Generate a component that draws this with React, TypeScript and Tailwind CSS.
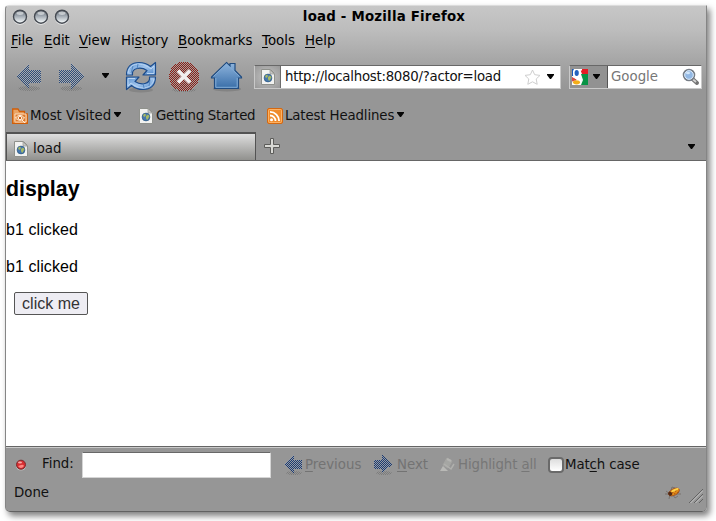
import React from 'react';

const U = ({ children }: { children: React.ReactNode }) => (
  <span className="underline decoration-1 underline-offset-2 [text-decoration-skip-ink:none]">{children}</span>
);

const Caret = ({ className = '' }: { className?: string }) => (
  <svg className={`shrink-0 ${className}`} width="7" height="5" viewBox="0 0 7 5">
    <path d="M0 0H7V1L4 5H3L0 1Z" fill="#050505" />
  </svg>
);

const Orb = () => (
  <svg width="16" height="16" viewBox="0 0 16 16" className="shrink-0">
    <defs>
      <linearGradient id="orb" x1="0" y1="0" x2="0" y2="1">
        <stop offset="0" stopColor="#5d646d" />
        <stop offset=".45" stopColor="#a2aab3" />
        <stop offset="1" stopColor="#fbffff" />
      </linearGradient>
    </defs>
    <circle cx="8" cy="8.7" r="7.200" fill="#e5e5e5" />
    <circle cx="8" cy="7.700" r="6.500" fill="url(#orb)" stroke="#454a52" strokeWidth="1.400" />
    <ellipse cx="8" cy="4.200" rx="3.500" ry="1.700" fill="#f0f3f5" opacity=".6" />
  </svg>
);

const DitherDefs = () => (
  <defs>
    <pattern id="ditherBlue" width="2" height="2" patternUnits="userSpaceOnUse">
      <rect width="2" height="2" fill="#a9abaf" />
      <path d="M0 0h1v1H0zM1 1h1v1H1z" fill="#2f4d78" shapeRendering="crispEdges" />
    </pattern>
    <pattern id="ditherNavy" width="2" height="2" patternUnits="userSpaceOnUse">
      <rect width="2" height="2" fill="#979ca5" />
      <path d="M0 0h1v1H0zM1 1h1v1H1z" fill="#1d3b70" shapeRendering="crispEdges" />
    </pattern>
    <pattern id="ditherRed" width="2" height="2" patternUnits="userSpaceOnUse">
      <rect width="2" height="2" fill="#a3a19f" />
      <path d="M1 0h1v1H1zM0 1h1v1H0z" fill="#8c1d15" shapeRendering="crispEdges" />
    </pattern>
    <pattern id="ditherShade" width="2" height="2" patternUnits="userSpaceOnUse">
      <path d="M0 0h1v1H0zM1 1h1v1H1z" fill="#7c7c7c" shapeRendering="crispEdges" />
    </pattern>
  </defs>
);

const BigArrow = ({ flip = false }: { flip?: boolean }) => (
  <svg width="28" height="30" viewBox="0 0 28 30" className="shrink-0">
    {!flip && <DitherDefs />}
    <ellipse cx="14" cy="26.500" rx="11" ry="2.500" fill="url(#ditherShade)" />
    <path
      d={flip ? 'M2 7.500H14V1L27 14L14 27V20.500H2Z' : 'M26 7.500H14V1L1 14L14 27V20.500H26Z'}
      fill="url(#ditherBlue)"
      shapeRendering="crispEdges"
    />
  </svg>
);

const SmallArrow = ({ flip = false }: { flip?: boolean }) => (
  <svg width="20" height="22" viewBox="0 0 20 22" className="shrink-0">
    <ellipse cx="11" cy="19" rx="8" ry="2" fill="url(#ditherShade)" />
    <path
      d={flip ? 'M1 6H9V1L19 10.500L9 19V15H1Z' : 'M19 6H11V1L1 10.500L11 19V15H19Z'}
      fill="url(#ditherNavy)"
      shapeRendering="crispEdges"
    />
  </svg>
);

const Reload = () => (
  <svg width="34" height="34" viewBox="0 0 34 34" className="shrink-0">
    <defs>
      <linearGradient id="rel" x1="0" y1="0" x2="1" y2="1">
        <stop offset="0" stopColor="#5c92cf" />
        <stop offset=".5" stopColor="#a0c4ec" />
        <stop offset="1" stopColor="#4d86c8" />
      </linearGradient>
    </defs>
    <ellipse cx="17" cy="30" rx="12" ry="2.500" fill="#7e7e7e" opacity=".7" />
    <g fill="url(#rel)" stroke="#1c4c8c" strokeWidth="1.200" strokeLinejoin="round">
      <path d="M2.500 15C2.500 6 8 2.500 15 2.500C20 2.500 23.500 4 26.500 6.500L31.500 2.500V15H19L23 10.500C20 8.500 17 7.500 13 8.500C9 9.500 8 12 8.500 15Z" />
      <path d="M31.500 17C31.500 26 26 29.500 19 29.500C14 29.500 10.500 28 7.500 25.500L2.500 29.500V17H15L11 21.500C14 23.500 17 24.500 21 23.500C25 22.500 26 20 25.500 17Z" />
    </g>
    <path d="M4 13C5 6 10 4 15 4C20 4 23 6 27 9L30 6V13.500H23M30 19C29 25 24 28 19 28C14 28 11 26 7 23L4 26V18.500H11" fill="none" stroke="#bad5f3" strokeWidth="1" />
    <path d="M9 6L7 13M14 4L13 9M19 23L20 28M26 20L25 26" stroke="#447ab9" strokeWidth=".8" />
  </svg>
);

const Stop = () => (
  <svg width="32" height="34" viewBox="0 0 32 34" className="shrink-0">
    <ellipse cx="16" cy="30" rx="12" ry="2" fill="url(#ditherShade)" />
    <circle cx="16" cy="16.500" r="15" fill="url(#ditherRed)" shapeRendering="crispEdges" />
    <path d="M10 10.500L22 22.500M22 10.500L10 22.500" stroke="#f0eeee" strokeWidth="3.800" />
  </svg>
);

const Home = () => (
  <svg width="34" height="34" viewBox="0 0 34 34" className="shrink-0">
    <defs>
      <linearGradient id="hom" x1="0" y1="0" x2="0" y2="1">
        <stop offset="0" stopColor="#8fb5dd" />
        <stop offset="1" stopColor="#386da8" />
      </linearGradient>
    </defs>
    <ellipse cx="17" cy="29" rx="14" ry="2.500" fill="#777" opacity=".6" />
    <path d="M16.500 2.500L20 6V3.500H25V10.500L31.500 17V18H28.500V28.500H4.500V18H1.500V17Z" fill="url(#hom)" stroke="#214c80" strokeWidth="1.200" />
    <path d="M3.500 16.500L16.500 4L29.500 16.500M5.800 18V27.300H27.200V18" fill="none" stroke="#83add7" strokeWidth="1" />
  </svg>
);

const Page = () => (
  <svg width="14" height="16" viewBox="0 0 14 16" className="shrink-0">
    <path d="M.5 .5H9.500L13.500 4.500V15.500H.5Z" fill="#f2f2f0" stroke="#8f918c" />
    <path d="M9 1V5H13Z" fill="#c8c9c5" stroke="#969793" strokeWidth=".7" />
    <circle cx="7" cy="9" r="3.900" fill="#4677ae" stroke="#28547f" strokeWidth=".7" />
    <path d="M4 7L6 5.500L7 7L6 8.500L5 9ZM7 8L9 6.500L10.500 8L9 11L8 12L7 10Z" fill="#a7b963" />
  </svg>
);

const Folder = () => (
  <svg width="16" height="16" viewBox="0 0 16 16" className="shrink-0">
    <path d="M.7 15V1H6L7.500 3.500H12.500V6H15.300V15.300H.7Z" fill="#eaa565" stroke="#d15e08" strokeWidth="1.300" />
    <path d="M3 13.500V6H14V14H3" fill="#dd7a2c" stroke="#ffdcba" />
    <path d="M3.500 10C6 6.500 10 6.500 12.500 10C10 13 6 13 3.500 10Z" fill="#e99953" stroke="#fff0df" />
    <circle cx="8" cy="10" r="1.700" fill="#cb621b" stroke="#fff0df" />
    <path d="M10 12L13 15" stroke="#fff0df" />
  </svg>
);

const Feed = () => (
  <svg width="16" height="16" viewBox="0 0 16 16" className="shrink-0">
    <rect x=".5" y=".5" width="15" height="15" rx="1.500" fill="#ef8b2c" stroke="#d36811" />
    <rect x="1.500" y="1.500" width="13" height="13" rx="1" fill="none" stroke="#ffbd74" strokeWidth=".8" />
    <circle cx="4.500" cy="11.700" r="1.500" fill="#fff" />
    <path d="M3 7.500A5.500 5.500 0 0 1 8.500 13M3 3.900A9.100 9.100 0 0 1 12.100 13" fill="none" stroke="#fff" strokeWidth="1.800" />
  </svg>
);

const Google = () => (
  <svg width="16" height="16" viewBox="0 0 16 16" className="shrink-0">
    <rect width="16" height="16" fill="#f9f9f9" />
    <path d="M8 0H16V5H10Z" fill="#e51b23" />
    <path d="M9 5H16V16H9L11 11Z" fill="#079345" />
    <path d="M0 8L5 11L2 14L0 12Z" fill="#d94a42" />
    <path d="M0 0H3L1 7H0Z" fill="#1958b8" />
    <path d="M2 0H10V1.500H8.500L9 7L7 8.500L9 11V15L7 16H1L0 13L5 10.500L3 8L1 6V2Z" fill="#fff" />
    <ellipse cx="4.700" cy="3.900" rx="2.100" ry="3" fill="#2462be" />
    <ellipse cx="4.500" cy="13.300" rx="3.500" ry="2.100" fill="#f4ae17" />
    <path d="M0 9L4 11" stroke="#d94a42" strokeWidth="1.200" />
  </svg>
);

const Magnifier = () => (
  <svg width="18" height="18" viewBox="0 0 18 18" className="shrink-0">
    <path d="M10.500 11L15 15" stroke="#747474" strokeWidth="4" strokeLinecap="round" />
    <path d="M10.500 11L14 14" stroke="#d3d3d3" strokeWidth="1.800" />
    <circle cx="7" cy="7" r="5.500" fill="#93b9e5" stroke="#777e87" strokeWidth="1.600" />
    <circle cx="7" cy="7" r="4.300" fill="none" stroke="#ddebf9" />
    <ellipse cx="6" cy="5" rx="2" ry="1.300" fill="#d4e7fa" />
  </svg>
);

const Star = () => (
  <svg width="17" height="17" viewBox="0 0 17 17" className="shrink-0">
    <path d="M8.500 1L10.700 5.700L16 6.400L12.200 10L13.200 15.300L8.500 12.800L3.800 15.300L4.800 10L1 6.400L6.300 5.700Z" fill="#fff" stroke="#cecece" strokeLinejoin="round" />
  </svg>
);

const Plus = () => (
  <svg width="17" height="17" viewBox="0 0 17 17" className="shrink-0">
    <path d="M6.500 .5H9.500V6.500H15.500V9.500H9.500V15.500H6.500V9.500H.5V6.500H6.500Z" fill="#d9d9d5" stroke="#5c5c5a" />
  </svg>
);

const Marker = () => (
  <svg width="17" height="16" viewBox="0 0 17 16" className="shrink-0">
    <path d="M1 14L4 9L9 14Z" fill="#b9b9b6" />
    <path d="M4 8L8 1L13 4L9 11Z" fill="#a5a6a3" stroke="#a5a5a2" />
    <path d="M5 7L12 12L15 7" fill="none" stroke="#b0b0ad" strokeWidth="1.500" />
    <path d="M8 2L12 4" stroke="#b5b5b2" strokeWidth="2" />
  </svg>
);

const Bug = () => (
  <svg width="16" height="14" viewBox="0 0 16 14" className="shrink-0">
    <path d="M0 8L5 8M1 5L5 8M5 8L4 13M8 9L10 12L13 10M11 8H16M6 4L7 1L10 2" fill="none" stroke="#6d6660" strokeWidth=".7" />
    <ellipse cx="9" cy="6" rx="5.800" ry="3.200" transform="rotate(-28 9 6)" fill="#e18b17" stroke="#9e4413" strokeWidth=".7" />
    <ellipse cx="10" cy="4" rx="4" ry="1.200" transform="rotate(-25 10 4)" fill="#ffd44d" />
    <path d="M3 7Q5 4 7 7Q8 9 5 10Q3 9 3 7" fill="#542a17" />
    <path d="M7 7L13 4M9 8L14 6" stroke="#9c4312" strokeWidth=".8" strokeDasharray="1.500 2" />
  </svg>
);

export default function App() {
  return (
    <div className="h-[521px] w-[716px] overflow-hidden bg-white pl-[5px] pt-[5px] font-['DejaVu_Sans',sans-serif] text-[13.333px] leading-[20px] text-[#111]">
      <div className="flex h-[507px] w-[702px] flex-col overflow-hidden rounded-b-[5px] rounded-tl-[4px] border border-[#858585] border-b-[#626262] border-t-[#dcdcdc] bg-[linear-gradient(to_bottom,#c7c7c7_0px,#bcbcbc_25px,#a6a6a6_55px,#969696_83px)] shadow-[3px_4px_6px_rgba(0,0,0,0.5)]">
        <header className="grid h-[21px] shrink-0 grid-cols-[76px_1fr_20px] items-center">
          <div className="flex gap-[5px] pl-[6px]"><Orb /><Orb /><Orb /></div>
          <div className="text-center font-bold tracking-[0.22px] text-black">load - Mozilla Firefox</div>
        </header>

        <nav className="flex h-[28px] shrink-0 items-start whitespace-nowrap pl-[5px] pt-[4px] text-black">
          <span className="w-[33px]"><U>F</U>ile</span>
          <span className="w-[35px]"><U>E</U>dit</span>
          <span className="w-[42px]"><U>V</U>iew</span>
          <span className="w-[57px]">Hi<U>s</U>tory</span>
          <span className="w-[84px]"><U>B</U>ookmarks</span>
          <span className="w-[43px]"><U>T</U>ools</span>
          <span><U>H</U>elp</span>
        </nav>

        <div className="flex h-[44px] shrink-0 items-center pl-[9px]">
          <BigArrow /><div className="w-[14px]" /><BigArrow flip />
          <Caret className="mb-[3px] ml-[17px]" />
          <div className="ml-[15px] flex items-center gap-[10px]"><Reload /><Stop /><Home /></div>
          <div className="ml-[10px] flex h-[24px] w-[307px] shrink-0 items-center border border-[#c9c9c9] border-t-[#686868] bg-white">
            <div className="flex h-full w-[26px] items-center justify-center border-r border-[#6c6c6c] bg-[radial-gradient(#c5c5c5,#989898)]"><Page /></div>
            <span className="w-[243px] whitespace-nowrap pl-[4px] tracking-[-0.265px]">http://localhost:8080/?actor=load</span>
            <Star /><Caret className="mb-[2px] ml-[6px]" />
          </div>
          <div className="ml-[8px] flex h-[24px] w-[133px] shrink-0 items-center border border-[#c9c9c9] border-t-[#686868] bg-white">
            <div className="flex h-full w-[38px] items-center border-r border-[#555] bg-[#929292] pl-[2px]"><Google /><Caret className="mb-[2px] ml-[5px]" /></div>
            <span className="w-[74px] pl-[3px] text-[#777]">Google</span>
            <Magnifier />
          </div>
        </div>

        <div className="flex h-[33px] shrink-0 items-center whitespace-nowrap pl-[6px]">
          <div className="flex w-[127px] items-center"><Folder /><span className="ml-[2px]">Most Visited</span><Caret className="mb-[3px] ml-[3px]" /></div>
          <div className="flex w-[128px] items-center"><Page /><span className="ml-[3px] tracking-[-0.25px]">Getting Started</span></div>
          <div className="flex items-center"><Feed /><span className="ml-[2px] tracking-[-0.13px]">Latest Headlines</span><Caret className="mb-[3px] ml-[3px]" /></div>
        </div>

        <div className="flex h-[29px] shrink-0 items-center border-b border-[#666]">
          <div className="flex h-full w-[250px] items-center border-l border-r border-t-2 border-[#535353] bg-gradient-to-b from-[#dedede] to-[#91918e] pl-[7px] pt-[3px]"><Page /><span className="ml-[5px]">load</span></div>
          <div className="ml-[8px]"><Plus /></div>
          <Caret className="ml-auto mr-[11px]" />
        </div>

        <main className="min-h-0 flex-1 bg-white font-['Liberation_Sans',Arial,sans-serif] text-[16px] leading-[18px] text-black">
          <h1 className="pt-[16px] text-[21.333px] font-bold leading-[25px]">display</h1>
          <p className="mt-[19px] tracking-[0.08px]">b1 clicked</p>
          <p className="mt-[19px] tracking-[0.08px]">b1 clicked</p>
          <button className="ml-[8px] mt-[16px] block h-[23px] w-[74px] rounded-[2px] border border-[#555] bg-[#eeedf3] text-center leading-[20px] text-[#333]">click me</button>
        </main>

        <footer className="h-[65px] shrink-0 border-t border-[#656565] bg-[#969696]">
          <div className="flex h-[35px] items-center whitespace-nowrap border-t border-[#cacaca] pl-[9px]">
            <svg width="12" height="12" viewBox="0 0 12 12" className="shrink-0">
              <circle cx="6" cy="6.600" r="5" fill="#bbb" /><circle cx="6" cy="5.700" r="4.500" fill="#d72d30" stroke="#78272a" />
              <path d="M3 7Q6 11 9 7Q8 5 6 6Z" fill="#ff8580" /><ellipse cx="5" cy="3.500" rx="2" ry="1" fill="#f5aaa9" />
            </svg>
            <span className="ml-[15px] w-[40px] pb-[2px]">Find:</span>
            <div className="h-[26px] w-[189px] shrink-0 border border-[#d5d5d5] border-t-[#686868] bg-white" />
            <div className="ml-[12px] flex w-[90px] items-center text-[#737373]"><SmallArrow /><span className="ml-[2px]"><U>P</U>revious</span></div>
            <div className="flex w-[66px] items-center text-[#737373]"><SmallArrow flip /><span className="ml-[4px]"><U>N</U>ext</span></div>
            <div className="flex w-[109px] items-center text-[#777]"><Marker /><span className="ml-[2px] tracking-[-0.1px]">Highlight <U>a</U>ll</span></div>
            <div className="h-[16px] w-[16px] shrink-0 rounded-[4px] border-2 border-[#6a6a6a] bg-gradient-to-b from-[#ddd] to-white" />
            <span className="ml-px tracking-[-0.1px]">Mat<U>c</U>h case</span>
          </div>
          <div className="flex h-[28px] items-start pl-[8px] pt-px">
            <span>Done</span>
            <div className="ml-auto mt-[3px]"><Bug /></div>
            <svg width="14" height="14" viewBox="0 0 14 14" className="ml-[8px] mr-[3px] mt-[6px]">
              <path d="M0 14L14 0M5 14L14 5M10 14L14 10" stroke="#626262" /><path d="M1.500 14L14 1.500M6.500 14L14 6.500" stroke="#c4c4c4" />
            </svg>
          </div>
        </footer>
      </div>
    </div>
  );
}
